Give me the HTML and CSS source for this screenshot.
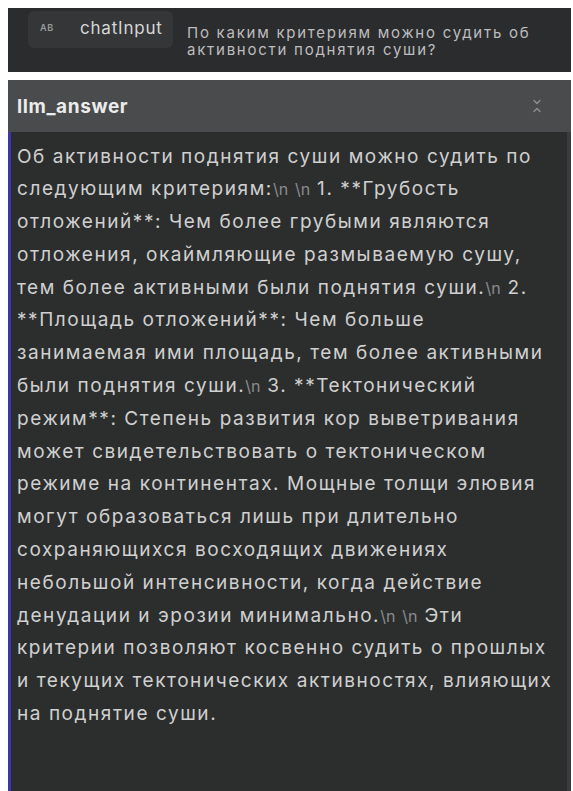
FILE: index.html
```html
<!DOCTYPE html>
<html lang="ru">
<head>
<meta charset="utf-8">
<title>llm_answer</title>
<link rel="stylesheet" href="styles.css">
</head>
<body>
  <div class="top">
    <div class="chip"><span class="chip-ab">AB</span><span class="chip-name">chatInput</span></div>
    <div class="question">По каким критериям можно судить об<br>активности поднятия суши?</div>
  </div>
  <div class="panel">
    <div class="panel-head">
      <span class="panel-title">llm_answer</span>
      <svg class="collapse" width="12" height="16" viewBox="0 0 12 16" fill="none" stroke="currentColor" stroke-width="1.4" stroke-linecap="round" stroke-linejoin="round">
        <path d="M3 2.5 L6 5.5 L9 2.5"/>
        <path d="M3 13.5 L6 10.5 L9 13.5"/>
      </svg>
    </div>
    <div class="panel-body">
      <p class="answer">Об активности поднятия суши можно судить по<br>следующим критериям:<span class="esc">\n</span> <span class="esc">\n</span> 1. **Грубость<br>отложений**: Чем более грубыми являются<br>отложения, окаймляющие размываемую сушу,<br>тем более активными были поднятия суши.<span class="esc">\n</span> 2.<br>**Площадь отложений**: Чем больше<br>занимаемая ими площадь, тем более активными<br>были поднятия суши.<span class="esc">\n</span> 3. **Тектонический<br>режим**: Степень развития кор выветривания<br>может свидетельствовать о тектоническом<br>режиме на континентах. Мощные толщи элювия<br>могут образоваться лишь при длительно<br>сохраняющихся восходящих движениях<br>небольшой интенсивности, когда действие<br>денудации и эрозии минимально.<span class="esc">\n</span> <span class="esc">\n</span> Эти<br>критерии позволяют косвенно судить о прошлых<br>и текущих тектонических активностях, влияющих<br>на поднятие суши.</p>
    </div>
  </div>
</body>
</html>
```
FILE: styles.css
```css
html, body {
  margin: 0;
  padding: 0;
  background: #ffffff;
}
body {
  padding: 8px 2px 0 8px;
  font-family: Inter, "Noto Sans", sans-serif;
  height: 791px;
  box-sizing: border-box;
  overflow: hidden;
  display: flex;
  flex-direction: column;
}
.top {
  height: 64px;
  background: #2b2c2d;
  display: flex;
  align-items: flex-start;
  padding-left: 20px;
  box-sizing: border-box;
  flex-shrink: 0;
}
.chip {
  margin-top: 3px;
  height: 37px;
  width: 145px;
  box-sizing: border-box;
  background: #353638;
  border-radius: 6px;
  display: flex;
  align-items: center;
  padding-left: 12px;
  padding-bottom: 4px;
}
.chip-ab {
  font-size: 9px;
  font-weight: 600;
  color: #9a9b9e;
  letter-spacing: 0.8px;
  width: 40px;
}
.chip-name {
  font-size: 17px;
  letter-spacing: 0.8px;
  color: #d6d6d6;
}
.question {
  margin-left: 14px;
  margin-top: 16px;
  font-size: 15px;
  line-height: 17px;
  letter-spacing: 1.75px;
  color: #bdbdbf;
  white-space: nowrap;
}
.panel {
  margin-top: 8px;
  flex: 1;
  display: flex;
  flex-direction: column;
}
.panel-head {
  height: 52px;
  background: #4a4b4d;
  display: flex;
  align-items: center;
  justify-content: space-between;
  padding: 0 28px 0 9px;
  flex-shrink: 0;
}
.panel-title {
  font-size: 19px;
  font-weight: 700;
  letter-spacing: 0.6px;
  color: #ececec;
}
.collapse {
  color: #8e8f92;
}
.panel-body {
  flex: 1;
  background: #2c2e2e;
  border-left: 3px solid #3d36a6;
  border-right: 4px solid #3a3b3d;
  padding: 8.5px 4px 0 6px;
  overflow: hidden;
}
.answer {
  margin: 0;
  font-size: 19px;
  line-height: 32.8px;
  letter-spacing: 1.55px;
  color: #d0d0d0;
  white-space: nowrap;
}
.esc {
  color: #8a8b8d;
  font-size: 16px;
  letter-spacing: 0;
}
```
